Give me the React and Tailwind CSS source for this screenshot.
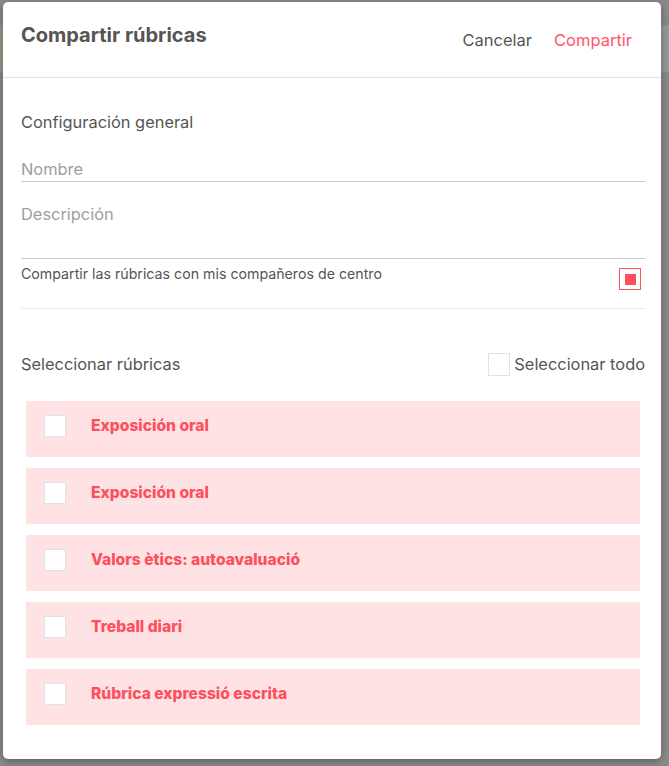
export default function App() {
  const items = [
    "Exposición oral",
    "Exposición oral",
    "Valors ètics: autoavaluació",
    "Treball diari",
    "Rúbrica expressió escrita",
  ];
  return (
    <div
      className="relative w-[669px] h-[766px] overflow-hidden bg-[#8b8b8b]"
      style={{ fontFamily: "Inter, 'Noto Sans', sans-serif" }}
    >
      {/* dimmed page behind */}
      <div className="flex flex-col">
        <div className="h-[25px]" />
        <div className="h-[47px] flex border-y border-[#959595]">
          <div className="w-[300px] bg-[#9c9888]" />
          <div className="flex-1 bg-[#969a9a]" />
        </div>
        <div className="h-[128px]" />
        <div className="h-[30px] border-y border-[#868a90]" />
        <div className="h-[158px] border-b border-[#868a90]" />
      </div>
      <div className="absolute left-[3px] top-[2px] w-[658px] h-[757px] bg-white rounded-[5px] shadow-[0_2px_8px_rgba(0,0,0,0.35)] flex flex-col">
        <div className="h-[76px] border-b border-[#e3e3e3] flex justify-between pl-[18px] pr-[29px]">
          <div className="mt-[21px] text-[20px] leading-[24px] font-bold text-[#555555]">
            Compartir rúbricas
          </div>
          <div className="mt-[26px] flex gap-[22px] text-[16.5px] leading-[24px]">
            <span className="text-[#555555]">Cancelar</span>
            <span className="text-[#ff5467]">Compartir</span>
          </div>
        </div>
        <div className="pl-[18px] pr-[16px] flex flex-col text-[16.4px]">
          <div className="mt-[32px] leading-[24px] text-[#555555]">
            Configuración general
          </div>
          <div className="mt-[23px] h-[25px] border-b border-[#c9c9c9] leading-[24px] text-[#9e9e9e]">
            Nombre
          </div>
          <div className="mt-[20px] h-[57px] border-b border-[#c9c9c9] leading-[24px] text-[#9e9e9e]">
            Descripción
          </div>
          <div className="mt-[5px] flex justify-between items-start pr-[4px]">
            <span className="text-[14.2px] leading-[20px] text-[#555555]">
              Compartir las rúbricas con mis compañeros de centro
            </span>
            <div className="mt-[4px] w-[22px] h-[22px] border border-[#ff4f5e] flex items-center justify-center">
              <div className="w-[11px] h-[11px] bg-[#ff4f5e]" />
            </div>
          </div>
          <div className="mt-[18px] h-px bg-[#e6edf7]" />
          <div className="mt-[43px] h-[24px] flex justify-between items-center">
            <span className="leading-[24px] text-[#555555]">
              Seleccionar rúbricas
            </span>
            <div className="flex items-center gap-[4px]">
              <div className="w-[22px] h-[23px] border border-[#dfe3e8] bg-white" />
              <span className="leading-[24px] text-[#555555]">
                Seleccionar todo
              </span>
            </div>
          </div>
          <div className="mt-[25px] mx-[5px] flex flex-col gap-[11px]">
            {items.map((t, i) => (
              <div
                key={i}
                className="h-[56px] bg-[#ffe2e4] flex items-start pt-[14px] pl-[18px]"
              >
                <div className="w-[22px] h-[22px] border border-[#dfe3e8] bg-white" />
                <span className="ml-[25px] text-[15.6px] leading-[22px] font-extrabold text-[#ff4f5e]">
                  {t}
                </span>
              </div>
            ))}
          </div>
        </div>
      </div>
    </div>
  );
}
